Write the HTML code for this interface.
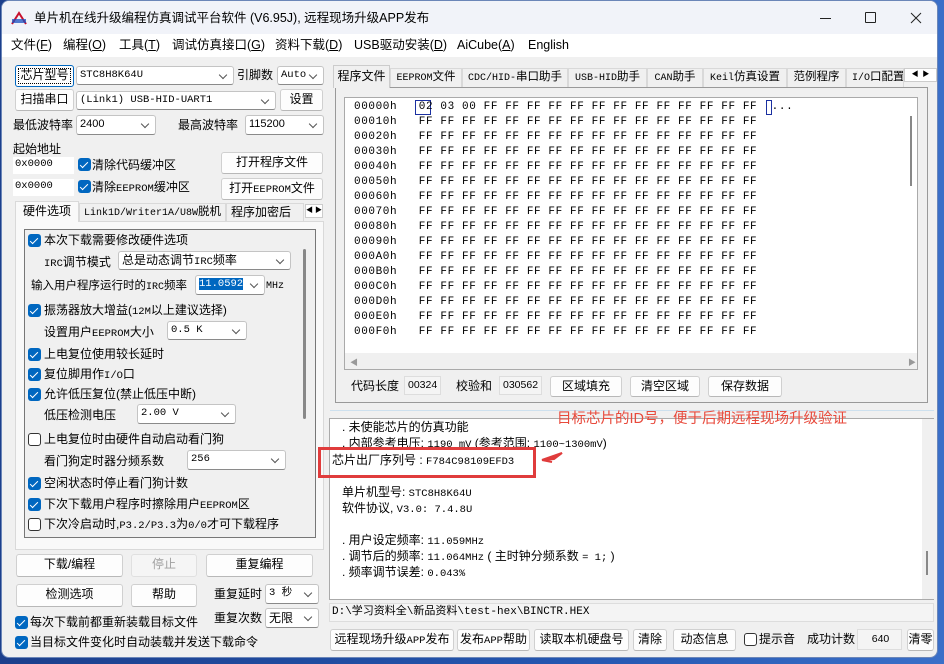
<!DOCTYPE html>
<html><head><meta charset="utf-8">
<style>
*{box-sizing:border-box;margin:0;padding:0}
body{width:944px;height:664px;overflow:hidden;background:linear-gradient(90deg,#1c3f8c,#2456b0 60%,#3a6fc8);font-family:"Liberation Sans","Noto Sans CJK SC",sans-serif;font-size:12px;color:#000;position:relative}
.win{position:absolute;left:1px;top:0;width:937px;height:658px;background:#f0f0f0;border-radius:8px;overflow:hidden;border:1px solid #6b86b8}
.a{position:absolute;white-space:nowrap}
.t{position:absolute;white-space:nowrap;line-height:16px;font-size:12px}
.m{font-family:"Liberation Mono","Noto Sans CJK SC",monospace;font-size:10.5px}
.btn{position:absolute;background:#fdfdfd;border:1px solid #d0d0d0;border-bottom-color:#b8b8b8;border-radius:3px;text-align:center;font-size:12px;line-height:19px;white-space:nowrap}
.cb{position:absolute;background:#fff;border:1px solid #c4c4c4;border-bottom-color:#8a8a8a;border-radius:3px;font-size:10.5px;padding-left:3px;line-height:17px;white-space:nowrap;font-family:"Liberation Mono","Noto Sans CJK SC",monospace}
.cb::after{content:"";position:absolute;right:7px;top:5px;width:5px;height:5px;border-right:1px solid #555;border-bottom:1px solid #555;transform:rotate(45deg)}
.in{position:absolute;background:#fff;border:1px solid #c8c8c8;border-bottom-color:#888;font-size:10.5px;line-height:15px;padding-left:2px;font-family:"Liberation Mono",monospace}
.ck{position:absolute;width:13px;height:13px;border-radius:3px;background:#0067c0}
.ck::after{content:"";position:absolute;left:4px;top:1.5px;width:3px;height:7px;border-right:1.5px solid #fff;border-bottom:1.5px solid #fff;transform:rotate(45deg)}
.uk{position:absolute;width:13px;height:13px;border-radius:3px;background:#fff;border:1px solid #333}
.tab{position:absolute;background:#f0f0f0;border:1px solid #d9d9d9;border-bottom:none;font-size:12px;line-height:19px;text-align:center;white-space:nowrap;overflow:hidden}
.hx{position:absolute;left:352px;font-family:"Liberation Mono",monospace;font-size:11px;line-height:15px;white-space:pre;letter-spacing:0.6px}
.lg{position:absolute;font-size:12px;line-height:16px;white-space:nowrap}
</style></head><body>
<div class="win">
<div class="a" style="left:0;top:0;width:937px;height:33px;background:#f1f3f9"></div>
<svg class="a" style="left:9px;top:10px" width="16" height="14"><path d="M1 13 L8 2 L15 13" stroke="#c8102e" stroke-width="2" fill="none"/><path d="M1 9h14M1 11h14" stroke="#1a4fc0" stroke-width="1.5"/></svg>
<div class="t" style="left:32px;top:9px;font-size:12.5px">单片机在线升级编程仿真调试平台软件 (V6.95J), 远程现场升级APP发布</div>
<div class="a" style="left:818px;top:17px;width:11px;height:1px;background:#222"></div>
<div class="a" style="left:863px;top:11px;width:11px;height:11px;border:1px solid #222;border-radius:1px"></div>
<svg class="a" style="left:908px;top:11px" width="12" height="12"><path d="M1 1L11 11M11 1L1 11" stroke="#222" stroke-width="1"/></svg>
<div class="a" style="left:0;top:33px;width:937px;height:23px;background:#fff"></div>
<div class="t" style="left:9px;top:36px;font-size:12.5px">文件(<u>F</u>)</div>
<div class="t" style="left:61px;top:36px;font-size:12.5px">编程(<u>O</u>)</div>
<div class="t" style="left:117px;top:36px;font-size:12.5px">工具(<u>T</u>)</div>
<div class="t" style="left:170px;top:36px;font-size:12.5px">调试仿真接口(<u>G</u>)</div>
<div class="t" style="left:273px;top:36px;font-size:12.5px">资料下载(<u>D</u>)</div>
<div class="t" style="left:352px;top:36px;font-size:12.5px">USB驱动安装(<u>D</u>)</div>
<div class="t" style="left:455px;top:36px;font-size:12.5px">AiCube(<u>A</u>)</div>
<div class="t" style="left:526px;top:36px;font-size:12.5px">English</div>

<div class="btn" style="left:13px;top:64px;width:59px;height:22px;border:1px solid #0067c0;outline:1px dotted #000;outline-offset:-4px">芯片型号</div>
<div class="cb" style="left:74px;top:65px;width:158px;height:19px">STC8H8K64U</div>
<div class="t" style="left:235px;top:66px">引脚数</div>
<div class="cb" style="left:275px;top:65px;width:47px;height:19px">Auto</div>
<div class="btn" style="left:13px;top:88px;width:59px;height:22px">扫描串口</div>
<div class="cb" style="left:74px;top:90px;width:200px;height:19px">(Link1) USB-HID-UART1</div>
<div class="btn" style="left:278px;top:88px;width:43px;height:22px">设置</div>
<div class="t" style="left:11px;top:116px">最低波特率</div>
<div class="cb" style="left:74px;top:114px;width:80px;height:20px;font-family:'Liberation Sans';font-size:11px">2400</div>
<div class="t" style="left:176px;top:116px">最高波特率</div>
<div class="cb" style="left:243px;top:114px;width:79px;height:20px;font-family:'Liberation Sans';font-size:11px">115200</div>
<div class="t" style="left:11px;top:140px">起始地址</div>
<div class="in" style="left:11px;top:156px;width:61px;height:17px;border:none;background:#fff">0x0000</div>
<div class="ck" style="left:76px;top:157px"></div>
<div class="t" style="left:90px;top:156px">清除代码缓冲区</div>
<div class="btn" style="left:219px;top:151px;width:102px;height:22px">打开程序文件</div>
<div class="in" style="left:11px;top:178px;width:61px;height:17px;border:none">0x0000</div>
<div class="ck" style="left:76px;top:179px"></div>
<div class="t" style="left:90px;top:178px">清除<span class="m">EEPROM</span>缓冲区</div>
<div class="btn" style="left:219px;top:177px;width:102px;height:22px">打开<span class="m">EEPROM</span>文件</div>
<div class="a" style="left:13px;top:220px;width:309px;height:329px;border:1px solid #d9d9d9;background:#f9f9f9"></div>
<div class="tab" style="left:13px;top:200px;width:64px;height:21px;background:#f9f9f9">硬件选项</div>
<div class="tab" style="left:77px;top:202px;width:147px;height:18px;line-height:17px;font-size:11.5px"><span class="m" style="font-size:10px">Link1D/Writer1A/U8W</span>脱机</div>
<div class="tab" style="left:224px;top:202px;width:78px;height:18px;line-height:17px;text-align:left;padding-left:4px">程序加密后</div>
<div class="a" style="left:303px;top:203px;width:18px;height:14px;background:#fff;border:1px solid #ccc;font-size:7px;line-height:12px;text-align:center">◀ ▶</div>
<div class="a" style="left:22px;top:228px;width:292px;height:309px;border:1px solid #777;background:#f0f0f0"></div>
<div class="a" style="left:301px;top:248px;width:3px;height:170px;background:#888;border-radius:2px"></div>
<div class="ck" style="left:26px;top:233px"></div><div class="t" style="left:42px;top:231px">本次下载需要修改硬件选项</div>
<div class="t" style="left:42px;top:253px"><span class="m">IRC</span>调节模式</div>
<div class="cb" style="left:116px;top:250px;width:173px;height:19px;font-family:'Noto Sans CJK SC';font-size:12px;line-height:16px">总是动态调节<span class="m">IRC</span>频率</div>
<div class="t" style="left:29px;top:277px;font-size:11.5px">输入用户程序运行时的<span class="m" style="font-size:10px">IRC</span>频率</div>
<div class="cb" style="left:193px;top:274px;width:70px;height:20px"><span style="background:#0067c0;color:#fff">11.0592</span></div>
<div class="t m" style="left:264px;top:278px;font-size:10px">MHz</div>
<div class="ck" style="left:26px;top:303px"></div><div class="t" style="left:42px;top:301px">振荡器放大增益(<span class="m">12M</span>以上建议选择)</div>
<div class="t" style="left:42px;top:323px">设置用户<span class="m">EEPROM</span>大小</div>
<div class="cb" style="left:165px;top:320px;width:80px;height:19px">0.5 K</div>
<div class="ck" style="left:26px;top:347px"></div><div class="t" style="left:42px;top:345px">上电复位使用较长延时</div>
<div class="ck" style="left:26px;top:367px"></div><div class="t" style="left:42px;top:365px">复位脚用作<span class="m">I/O</span>口</div>
<div class="ck" style="left:26px;top:387px"></div><div class="t" style="left:42px;top:385px">允许低压复位(禁止低压中断)</div>
<div class="t" style="left:42px;top:406px">低压检测电压</div>
<div class="cb" style="left:135px;top:403px;width:99px;height:20px">2.00 V</div>
<div class="uk" style="left:26px;top:432px"></div><div class="t" style="left:42px;top:430px">上电复位时由硬件自动启动看门狗</div>
<div class="t" style="left:42px;top:452px">看门狗定时器分频系数</div>
<div class="cb" style="left:185px;top:449px;width:99px;height:20px">256</div>
<div class="ck" style="left:26px;top:476px"></div><div class="t" style="left:42px;top:474px">空闲状态时停止看门狗计数</div>
<div class="ck" style="left:26px;top:497px"></div><div class="t" style="left:42px;top:495px">下次下载用户程序时擦除用户<span class="m">EEPROM</span>区</div>
<div class="uk" style="left:26px;top:517px"></div><div class="t" style="left:42px;top:515px">下次冷启动时,<span class="m">P3.2/P3.3</span>为<span class="m">0/0</span>才可下载程序</div>
<div class="btn" style="left:14px;top:553px;width:107px;height:23px">下载/编程</div>
<div class="btn" style="left:129px;top:553px;width:66px;height:23px;color:#a0a0a0;background:#f5f5f5;border-color:#e0e0e0">停止</div>
<div class="btn" style="left:204px;top:553px;width:107px;height:23px">重复编程</div>
<div class="btn" style="left:14px;top:583px;width:107px;height:23px">检测选项</div>
<div class="btn" style="left:129px;top:583px;width:66px;height:23px">帮助</div>
<div class="t" style="left:212px;top:585px">重复延时</div>
<div class="cb" style="left:263px;top:583px;width:54px;height:20px;font-family:'Liberation Mono','Noto Sans CJK SC'">3 秒</div>
<div class="t" style="left:212px;top:609px">重复次数</div>
<div class="cb" style="left:263px;top:607px;width:54px;height:20px;font-family:'Noto Sans CJK SC';font-size:12px;line-height:17px">无限</div>
<div class="ck" style="left:13px;top:615px"></div><div class="t" style="left:28px;top:613px">每次下载前都重新装载目标文件</div>
<div class="ck" style="left:13px;top:635px"></div><div class="t" style="left:28px;top:633px">当目标文件变化时自动装载并发送下载命令</div>

<div class="a" style="left:333px;top:86px;width:593px;height:316px;border:1px solid #999;background:#f0f0f0"></div>
<div class="tab" style="left:331px;top:64px;width:57px;height:23px;line-height:20px;border-color:#ccc">程序文件</div>
<div class="tab" style="left:388px;top:67px;width:72px;height:19px;line-height:17px;font-size:11.5px"><span class="m" style="font-size:10px">EEPROM</span>文件</div>
<div class="tab" style="left:460px;top:67px;width:106px;height:19px;line-height:17px;font-size:11.5px"><span class="m" style="font-size:10px">CDC/HID-</span>串口助手</div>
<div class="tab" style="left:566px;top:67px;width:79px;height:19px;line-height:17px;font-size:11.5px"><span class="m" style="font-size:10px">USB-HID</span>助手</div>
<div class="tab" style="left:645px;top:67px;width:56px;height:19px;line-height:17px;font-size:11.5px"><span class="m" style="font-size:10px">CAN</span>助手</div>
<div class="tab" style="left:701px;top:67px;width:84px;height:19px;line-height:17px;font-size:11.5px"><span class="m" style="font-size:10px">Keil</span>仿真设置</div>
<div class="tab" style="left:785px;top:67px;width:59px;height:19px;line-height:17px;font-size:11.5px">范例程序</div>
<div class="tab" style="left:844px;top:67px;width:58px;height:19px;line-height:17px;text-align:left;padding-left:5px;font-size:11.5px"><span class="m" style="font-size:10px">I/O</span>口配置</div>
<div class="a" style="left:902px;top:67px;width:33px;height:14px;background:#fff;border:1px solid #ccc;font-size:7px;line-height:12px;text-align:center">◀ &nbsp;▶</div>
<div class="a" style="left:342px;top:96px;width:574px;height:273px;background:#fff;border:1px solid #aaa"></div>
<div class="a" style="left:343px;top:352px;width:572px;height:16px;background:#f0f0f0"></div>
<div class="a" style="left:348px;top:356px;font-size:8px;color:#999">◀</div>
<div class="a" style="left:906px;top:356px;font-size:8px;color:#999">▶</div>
<div class="a" style="left:908px;top:115px;width:2px;height:70px;background:#888"></div>
<div class="a" style="left:413px;top:99px;width:16px;height:15px;border:1px solid #1a2fa0"></div>
<div class="a" style="left:764px;top:99px;width:6px;height:15px;border:1px solid #1a2fa0"></div>
<div class="hx" style="top:99px">00000h   02 03 00 FF FF FF FF FF FF FF FF FF FF FF FF FF  ...</div>
<div class="hx" style="top:114px">00010h   FF FF FF FF FF FF FF FF FF FF FF FF FF FF FF FF</div>
<div class="hx" style="top:129px">00020h   FF FF FF FF FF FF FF FF FF FF FF FF FF FF FF FF</div>
<div class="hx" style="top:144px">00030h   FF FF FF FF FF FF FF FF FF FF FF FF FF FF FF FF</div>
<div class="hx" style="top:159px">00040h   FF FF FF FF FF FF FF FF FF FF FF FF FF FF FF FF</div>
<div class="hx" style="top:174px">00050h   FF FF FF FF FF FF FF FF FF FF FF FF FF FF FF FF</div>
<div class="hx" style="top:189px">00060h   FF FF FF FF FF FF FF FF FF FF FF FF FF FF FF FF</div>
<div class="hx" style="top:204px">00070h   FF FF FF FF FF FF FF FF FF FF FF FF FF FF FF FF</div>
<div class="hx" style="top:219px">00080h   FF FF FF FF FF FF FF FF FF FF FF FF FF FF FF FF</div>
<div class="hx" style="top:234px">00090h   FF FF FF FF FF FF FF FF FF FF FF FF FF FF FF FF</div>
<div class="hx" style="top:249px">000A0h   FF FF FF FF FF FF FF FF FF FF FF FF FF FF FF FF</div>
<div class="hx" style="top:264px">000B0h   FF FF FF FF FF FF FF FF FF FF FF FF FF FF FF FF</div>
<div class="hx" style="top:279px">000C0h   FF FF FF FF FF FF FF FF FF FF FF FF FF FF FF FF</div>
<div class="hx" style="top:294px">000D0h   FF FF FF FF FF FF FF FF FF FF FF FF FF FF FF FF</div>
<div class="hx" style="top:309px">000E0h   FF FF FF FF FF FF FF FF FF FF FF FF FF FF FF FF</div>
<div class="hx" style="top:324px">000F0h   FF FF FF FF FF FF FF FF FF FF FF FF FF FF FF FF</div>
<div class="t" style="left:349px;top:377px">代码长度</div>
<div class="in" style="left:402px;top:375px;width:37px;height:19px;background:#f4f4f4;border-color:#ddd;font-family:'Liberation Sans';font-size:10.5px;line-height:16px;padding-left:3px">00324</div>
<div class="t" style="left:454px;top:377px">校验和</div>
<div class="in" style="left:497px;top:375px;width:43px;height:19px;background:#f4f4f4;border-color:#ddd;font-family:'Liberation Sans';font-size:10.5px;line-height:16px;padding-left:3px">030562</div>
<div class="btn" style="left:548px;top:375px;width:72px;height:21px">区域填充</div>
<div class="btn" style="left:628px;top:375px;width:70px;height:21px">清空区域</div>
<div class="btn" style="left:706px;top:375px;width:74px;height:21px">保存数据</div>
<div class="a" style="left:328px;top:409px;width:604px;height:1px;background:#cde0ee"></div>
<div class="a" style="left:327px;top:417px;width:605px;height:182px;background:#fff;border:1px solid #aaa;border-right:none"></div>
<div class="a" style="left:920px;top:418px;width:12px;height:180px;background:#f0f0f0"></div>
<div class="a" style="left:924px;top:550px;width:2px;height:24px;background:#888"></div>
<div class="lg" style="left:340px;top:418px">. 未使能芯片的仿真功能</div>
<div class="lg" style="left:340px;top:434px">. 内部参考电压: <span class="m">1190 mV</span> (参考范围: <span class="m">1100~1300mV</span>)</div>
<div class="lg" style="left:330px;top:451px">芯片出厂序列号 : <span class="m">F784C98109EFD3</span></div>
<div class="lg" style="left:340px;top:483px">单片机型号: <span class="m">STC8H8K64U</span></div>
<div class="lg" style="left:340px;top:499px">软件协议, <span class="m">V3.0: 7.4.8U</span></div>
<div class="lg" style="left:340px;top:531px">. 用户设定频率: <span class="m">11.059MHz</span></div>
<div class="lg" style="left:340px;top:547px">. 调节后的频率: <span class="m">11.064MHz</span> ( 主时钟分频系数 <span class="m">= 1;</span> )</div>
<div class="lg" style="left:340px;top:563px">. 频率调节误差: <span class="m">0.043%</span></div>
<div class="a" style="left:316px;top:446px;width:218px;height:31px;border:3px solid #e03c3c"></div>
<svg class="a" style="left:538px;top:449px" width="26" height="14"><path d="M2 10 L22 3 L14 9 Z M2 10 L12 12" fill="#e03c3c" stroke="#e03c3c" stroke-width="2"/></svg>
<div class="t" style="left:555px;top:409px;color:#e84a3c;font-size:14.5px;line-height:18px">目标芯片的ID号，便于后期远程现场升级验证</div>
<div class="a" style="left:327px;top:602px;width:605px;height:19px;background:#f4f4f4;border:1px solid #ddd"></div>
<div class="lg" style="left:330px;top:603px;font-family:'Liberation Mono','Noto Sans CJK SC',monospace;font-size:11px">D:\学习资料全\新品资料\test-hex\BINCTR.HEX</div>
<div class="btn" style="left:328px;top:628px;width:124px;height:22px">远程现场升级<span class="m">APP</span>发布</div>
<div class="btn" style="left:455px;top:628px;width:73px;height:22px">发布<span class="m">APP</span>帮助</div>
<div class="btn" style="left:532px;top:628px;width:95px;height:22px">读取本机硬盘号</div>
<div class="btn" style="left:631px;top:628px;width:34px;height:22px">清除</div>
<div class="btn" style="left:671px;top:628px;width:63px;height:22px">动态信息</div>
<div class="uk" style="left:742px;top:632px"></div>
<div class="t" style="left:757px;top:630px">提示音</div>
<div class="t" style="left:805px;top:630px">成功计数</div>
<div class="in" style="left:855px;top:628px;width:45px;height:21px;background:#f4f4f4;border-color:#ddd;text-align:center;line-height:18px;font-family:'Liberation Sans';font-size:10.5px">640</div>
<div class="btn" style="left:905px;top:628px;width:27px;height:22px">清零</div>
</div>
</body></html>
